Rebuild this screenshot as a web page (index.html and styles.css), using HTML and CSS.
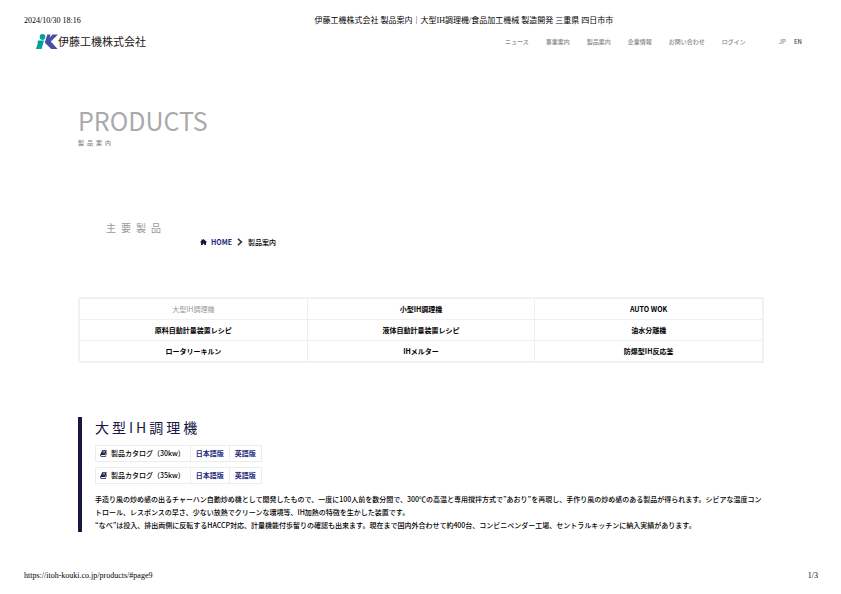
FILE: index.html
```
<!DOCTYPE html>
<html lang="ja">
<head>
    <meta charset="UTF-8" />
    <meta name="viewport" content="width=device-width, initial-scale=1.0" />
    <title>伊藤工機株式会社 製品案内｜大型IH調理機/食品加工機械 製造開発 三重県 四日市市</title>
    <link rel="stylesheet" href="styles.css">
</head>
<body>
    <div class="sheet-head">
        <span>2024/10/30 18:16</span>
        <span class="sheet-title">伊藤工機株式会社 製品案内｜大型IH調理機/食品加工機械 製造開発 三重県 四日市市</span>
    </div>

    <header class="site-header">
        <a class="logo" href="#">
            <svg class="logo-mark" viewBox="0 0 22 15" aria-hidden="true">
                <circle cx="6.5" cy="2.9" r="2.8" fill="#00a09b" />
                <path d="M2 6.4H8L5.6 15H0L2 8.6H1.4Z" fill="#00a09b" />
                <path d="M11.4 0.6H14.6L13.6 3.8L16.6 0.6H22L14.8 7.4L21.6 15H15.2L9.6 9.4L8.8 8.4Z" fill="#464fa3" />
            </svg>
            <span>伊藤工機株式会社</span>
        </a>
        <nav class="nav">
            <a href="#">ニュース</a>
            <a href="#">事業案内</a>
            <a href="#">製品案内</a>
            <a href="#">企業情報</a>
            <a href="#">お問い合わせ</a>
            <a href="#">ログイン</a>
        </nav>
        <div class="lang">
            <a href="#">JP</a>
            <a class="current" href="#">EN</a>
        </div>
    </header>

    <main>
        <h1>PRODUCTS</h1>
        <p class="subtitle">製品案内</p>

        <h2 class="section-title">主要製品</h2>
        <nav class="breadcrumb">
            <svg class="home-icon" viewBox="0 0 16 14" aria-hidden="true">
                <path d="M8 0L16 7L15 8.3L13.8 7.3V14H9.5V11H6.5V14H2.2V7.3L1 8.3L0 7L3 4.4V1H5V2.6Z" fill="#17173f" />
            </svg>
            <a href="#">HOME</a>
            <svg class="chevron" viewBox="0 0 6 8" aria-hidden="true">
                <path d="M1 0.8L4.4 4L1 7.2" fill="none" stroke="#333" stroke-width="1.6" />
            </svg>
            <span>製品案内</span>
        </nav>

        <div class="product-menu">
            <a class="active" href="#page9">大型IH調理機</a>
            <a href="#">小型IH調理機</a>
            <a href="#">AUTO WOK</a>
            <a href="#">原料自動計量装置レシピ</a>
            <a href="#">液体自動計量装置レシピ</a>
            <a href="#">油水分離機</a>
            <a href="#">ロータリーキルン</a>
            <a href="#">IHメルター</a>
            <a href="#">防爆型IH反応釜</a>
        </div>

        <section class="product" id="page9">
            <h3>大型IH調理機</h3>
            <div class="catalog">
                <span class="catalog-name">
                    <svg class="book-icon" viewBox="0 0 14 14" aria-hidden="true">
                        <path d="M4.5 0.5H13.5L10.5 10H2.5Q1.5 11.5 3 12H11L13.2 4L14 5L11.6 13.5H2.5Q-0.5 12.5 0.5 9.5Z" fill="#17173f" />
                        <path d="M5.8 3.2H10.8M5.1 5.5H10" stroke="#fff" />
                    </svg>製品カタログ（30kw）</span>
                <a href="#">日本語版</a>
                <a href="#">英語版</a>
            </div>
            <div class="catalog">
                <span class="catalog-name">
                    <svg class="book-icon" viewBox="0 0 14 14" aria-hidden="true">
                        <path d="M4.5 0.5H13.5L10.5 10H2.5Q1.5 11.5 3 12H11L13.2 4L14 5L11.6 13.5H2.5Q-0.5 12.5 0.5 9.5Z" fill="#17173f" />
                        <path d="M5.8 3.2H10.8M5.1 5.5H10" stroke="#fff" />
                    </svg>製品カタログ（35kw）</span>
                <a href="#">日本語版</a>
                <a href="#">英語版</a>
            </div>
            <p>手造り風の炒め感の出るチャーハン自動炒め機として開発したもので、一度に100人前を数分間で、300℃の高温と専用撹拌方式で”あおり”を再現し、手作り風の炒め感のある製品が得られます。シビアな温度コントロール、レスポンスの早さ、少ない放熱でクリーンな環境等、IH加熱の特徴を生かした装置です。<br>“なべ”は投入、排出両側に反転するHACCP対応、計量機能付歩留りの確認も出来ます。現在まで国内外合わせて約400台、コンビニベンダー工場、セントラルキッチンに納入実績があります。</p>
        </section>
    </main>

    <footer class="sheet-foot">
        <span>https://itoh-kouki.co.jp/products/#page9</span>
        <span>1/3</span>
    </footer>
</body>
</html>
```
FILE: styles.css
```
* {
    box-sizing: border-box;
}

body {
    margin: 0;
    padding: 14px 23px 12px 24px;
    min-height: 100vh;
    display: flex;
    flex-direction: column;
    background: #fff;
    color: #000;
    font-family: "Noto Sans CJK JP", sans-serif;
    font-size: 7px;
    font-weight: 500;
    line-height: 13px;
}

a {
    color: inherit;
    text-decoration: none;
}

h1, h2, h3, p {
    margin: 0;
}

.sheet-head,
.sheet-foot {
    display: flex;
    justify-content: space-between;
    font-family: "Liberation Serif", "Noto Sans CJK JP", serif;
    font-size: 8px;
    font-weight: 400;
}

.sheet-title {
    flex: 1;
    padding-left: 29px;
    text-align: center;
}

.sheet-foot {
    margin-top: auto;
}

.site-header {
    display: flex;
    align-items: center;
    margin-top: 5px;
    padding: 0 16px 0 12px;
    color: #888;
    font-size: 6px;
}

.logo {
    display: flex;
    align-items: center;
    margin-right: auto;
    color: #231815;
    font-size: 11px;
    font-weight: 400;
    line-height: 18px;
}

.logo-mark {
    width: 22px;
    height: 15px;
}

.nav {
    display: flex;
    gap: 17px;
}

.lang {
    display: flex;
    gap: 8px;
    margin-left: 33px;
}

.lang .current {
    color: #444;
}

main {
    padding: 0 54px;
}

h1 {
    margin-top: 52px;
    color: #aaa;
    font-size: 25px;
    font-weight: 400;
    line-height: 36px;
}

.subtitle {
    color: #888;
    font-size: 6px;
    line-height: 10px;
    letter-spacing: 3px;
}

.section-title {
    margin: 72px 0 0 28px;
    color: #999;
    font-size: 10px;
    font-weight: 400;
    line-height: 16px;
    letter-spacing: 5px;
}

.breadcrumb {
    display: flex;
    align-items: center;
    gap: 4px;
    margin-left: 122px;
    line-height: 12px;
}

.breadcrumb a {
    color: #22267a;
    font-weight: 700;
}

.home-icon {
    width: 7px;
    height: 6px;
}

.chevron {
    width: 6px;
    height: 8px;
    margin: 0 1px;
}

.product-menu {
    display: grid;
    grid-template-columns: repeat(3, 1fr);
    gap: 1px;
    margin-top: 49px;
    padding: 1px;
    border: 1px solid #f5f5f5;
    background: #efefef;
    line-height: 12px;
}

.product-menu a {
    padding: 4px 0;
    background: #fff;
    font-weight: 700;
    text-align: center;
}

.product-menu .active {
    color: #999;
    font-weight: 400;
}

.product {
    margin-top: 54px;
    padding-left: 13px;
    border-left: 4px solid #17173f;
}

h3 {
    margin-bottom: 8px;
    color: #17173f;
    font-size: 14px;
    font-weight: 400;
    line-height: 20px;
    letter-spacing: 3px;
}

.catalog {
    display: flex;
    width: fit-content;
    margin-bottom: 5px;
    border: 1px solid #ececec;
}

.catalog > * {
    padding: 1px 5px;
}

.catalog a {
    border-left: 1px solid #ececec;
    color: #22267a;
    font-weight: 700;
}

.catalog .catalog-name {
    display: flex;
    align-items: center;
    gap: 4px;
    padding-left: 4px;
}

.book-icon {
    width: 7px;
    height: 7px;
}

.product p {
    padding-top: 4px;
}
```
